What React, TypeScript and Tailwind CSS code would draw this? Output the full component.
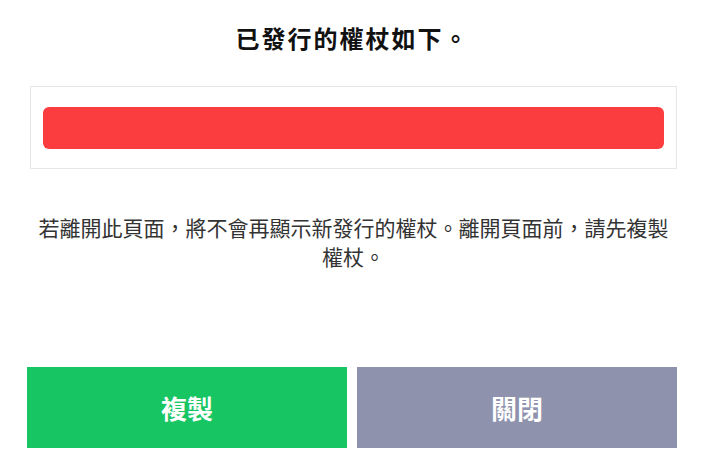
export default function App() {
  const font = { fontFamily: '"Noto Sans CJK TC", "Noto Sans CJK SC", sans-serif' };
  return (
    <div className="w-[705px] h-[466px] bg-white overflow-hidden" style={font}>
      <div className="pt-[26px] text-center text-[24px] leading-[24px] font-bold text-[#111] tracking-[2px]">
        已發行的權杖如下。
      </div>
      <div className="ml-[30px] mt-[36px] w-[647px] h-[83px] border border-[#e6e6e6] px-[12px] pt-[20px]">
        <div className="h-[42px] w-full rounded-[6px] bg-[#fc3d40]" />
      </div>
      <p className="ml-[30px] mt-[44px] w-[647px] text-center text-[21px] leading-[29px] text-[#333]">
        若離開此頁面，將不會再顯示新發行的權杖。離開頁面前，請先複製權杖。
      </p>
      <div className="ml-[27px] mt-[96px] flex gap-[10px]">
        <button className="w-[320px] h-[81px] bg-[#18c563] text-white text-[26px] font-bold flex items-center justify-center">
          複製
        </button>
        <button className="w-[320px] h-[81px] bg-[#8e92ac] text-white text-[26px] font-bold flex items-center justify-center">
          關閉
        </button>
      </div>
    </div>
  );
}
